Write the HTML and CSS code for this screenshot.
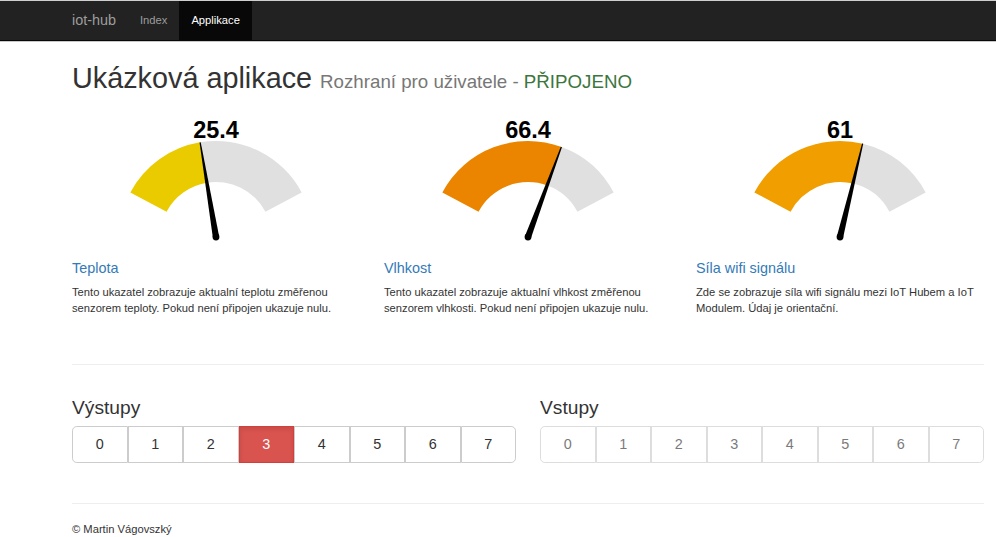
FILE: index.html
```html
<!DOCTYPE html>
<html lang="cs">
<head>
<meta charset="utf-8">
<title>iot-hub</title>
<link rel="stylesheet" href="styles.css">
</head>
<body>
<nav class="navbar">
  <div class="nav-inner">
    <span class="brand">iot-hub</span>
    <span class="nav-link">Index</span>
    <span class="nav-link active">Applikace</span>
  </div>
</nav>
<main class="main">
  <h1 class="title">Ukázková aplikace <small class="subtitle">Rozhraní pro uživatele - <span class="ok">PŘIPOJENO</span></small></h1>

  <section class="gauges">
    <div class="gauge-col">
      <svg class="gauge" width="288" height="132" viewBox="0 0 288 132">
        <path fill="#eacb00" d="M58.354 79.461 A97 97 0 0 1 127.974 29.333 L134.748 69.769 A56 56 0 0 0 94.555 98.710 Z"/>
        <path fill="#e0e0e0" d="M127.974 29.333 A97 97 0 0 1 229.646 79.461 L193.445 98.710 A56 56 0 0 0 134.748 69.769 Z"/>
        <polygon fill="#000" points="147.156,123.471 140.844,124.529 127.547,29.418 128.731,29.220"/>
        <circle cx="144" cy="124" r="3.4" fill="#000"/>
        <text class="gval" x="144" y="25.3" text-anchor="middle">25.4</text>
      </svg>
      <h4 class="gtitle">Teplota</h4>
      <p class="gdesc">Tento ukazatel zobrazuje aktualní teplotu změřenou senzorem teploty. Pokud není připojen ukazuje nulu.</p>
    </div>
    <div class="gauge-col">
      <svg class="gauge" width="288" height="132" viewBox="0 0 288 132">
        <path fill="#eb8500" d="M58.354 79.461 A97 97 0 0 1 177.710 34.045 L163.462 72.490 A56 56 0 0 0 94.555 98.710 Z"/>
        <path fill="#e0e0e0" d="M177.710 34.045 A97 97 0 0 1 229.646 79.461 L193.445 98.710 A56 56 0 0 0 163.462 72.490 Z"/>
        <polygon fill="#000" points="147.001,125.112 140.999,122.888 176.800,33.775 177.926,34.192"/>
        <circle cx="144" cy="124" r="3.4" fill="#000"/>
        <text class="gval" x="144" y="25.3" text-anchor="middle">66.4</text>
      </svg>
      <h4 class="gtitle">Vlhkost</h4>
      <p class="gdesc">Tento ukazatel zobrazuje aktualní vlhkost změřenou senzorem vlhkosti. Pokud není připojen ukazuje nulu.</p>
    </div>
    <div class="gauge-col">
      <svg class="gauge" width="288" height="132" viewBox="0 0 288 132">
        <path fill="#f09e00" d="M58.354 79.461 A97 97 0 0 1 166.875 30.733 L157.206 70.578 A56 56 0 0 0 94.555 98.710 Z"/>
        <path fill="#e0e0e0" d="M166.875 30.733 A97 97 0 0 1 229.646 79.461 L193.445 98.710 A56 56 0 0 0 157.206 70.578 Z"/>
        <polygon fill="#000" points="147.110,124.755 140.890,123.245 166.056,30.564 167.222,30.846"/>
        <circle cx="144" cy="124" r="3.4" fill="#000"/>
        <text class="gval" x="144" y="25.3" text-anchor="middle">61</text>
      </svg>
      <h4 class="gtitle">Síla wifi signálu</h4>
      <p class="gdesc">Zde se zobrazuje síla wifi signálu mezi IoT Hubem a IoT Modulem. Údaj je orientační.</p>
    </div>
  </section>

  <hr class="sep sep-io">

  <section class="io">
    <div class="io-col">
      <h3 class="io-title">Výstupy</h3>
      <div class="btn-group">
        <span class="btn">0</span>
        <span class="btn">1</span>
        <span class="btn">2</span>
        <span class="btn btn-on">3</span>
        <span class="btn">4</span>
        <span class="btn">5</span>
        <span class="btn">6</span>
        <span class="btn">7</span>
      </div>
    </div>
    <div class="io-col">
      <h3 class="io-title">Vstupy</h3>
      <div class="btn-group disabled">
        <span class="btn">0</span>
        <span class="btn">1</span>
        <span class="btn">2</span>
        <span class="btn">3</span>
        <span class="btn">4</span>
        <span class="btn">5</span>
        <span class="btn">6</span>
        <span class="btn">7</span>
      </div>
    </div>
  </section>

  <hr class="sep sep-footer">
  <footer class="footer">© Martin Vágovszký</footer>
</main>
</body>
</html>
```

FILE: styles.css
```css
* { box-sizing: border-box; }

html, body {
  margin: 0;
  padding: 0;
  background: #fff;
}

body {
  font-family: "Liberation Sans", Arial, sans-serif;
  font-size: 11.2px;
  line-height: 16px;
  color: #333;
}

.navbar {
  height: 41px;
  background: #222;
  border-top: 1px solid #cfcfcf;
  border-bottom: 1px solid #080808;
  box-shadow: 0 1px 0 #c8c8c8;
}

.nav-inner {
  display: flex;
  height: 39px;
  padding-left: 72px;
}

.brand {
  font-size: 14.4px;
  line-height: 39px;
  color: #9d9d9d;
  padding-right: 12px;
}

.nav-link {
  font-size: 11.2px;
  line-height: 39px;
  color: #9d9d9d;
  padding: 0 12px;
}

.nav-link.active {
  background: #080808;
  color: #fff;
}

.main {
  width: 996px;
  padding: 0 12px 0 72px;
}

.title {
  margin: 22px 0 0;
  font-size: 28.8px;
  line-height: 1.1;
  font-weight: normal;
  color: #333;
}

.subtitle {
  font-size: 18.72px;
  color: #777;
}

.ok { color: #3c763d; }

.gauges {
  display: grid;
  grid-template-columns: repeat(3, 288px);
  column-gap: 24px;
  margin-top: 18px;
}

.gauge {
  display: block;
}

.gval {
  font-family: "Liberation Sans", Arial, sans-serif;
  font-weight: bold;
  font-size: 23.5px;
  fill: #000;
}

.gtitle {
  margin: 16.4px 0 7.5px;
  font-size: 14.4px;
  line-height: 1.1;
  font-weight: normal;
  color: #337ab7;
}

.gdesc {
  margin: 0;
}

.sep {
  border: 0;
  border-top: 1px solid #eee;
  margin: 0;
  width: 912px;
}

.sep-io { margin-top: 47.1px; }

.io {
  display: grid;
  grid-template-columns: 444px 444px;
  column-gap: 24px;
}

.io-title {
  margin: 32.8px 0 7.2px;
  font-size: 19.2px;
  line-height: 1.1;
  font-weight: normal;
  color: #333;
}

.btn-group {
  display: flex;
  height: 37.2px;
}

.btn {
  flex: 1 1 0;
  display: flex;
  align-items: center;
  justify-content: center;
  font-size: 14.4px;
  color: #333;
  background: #fff;
  border: 1px solid #ccc;
}

.btn:first-child {
  border-radius: 4.8px 0 0 4.8px;
}

.btn:last-child {
  border-radius: 0 4.8px 4.8px 0;
}

.btn-on {
  background: #d9534f;
  border-color: #d43f3a;
  color: #fff;
  box-shadow: inset 0 2px 4px rgba(0, 0, 0, 0.1);
}

.disabled .btn {
  opacity: 0.65;
}

.sep-footer { margin-top: 40.4px; }

.footer {
  margin-top: 16.4px;
  padding-bottom: 12px;
}
```
